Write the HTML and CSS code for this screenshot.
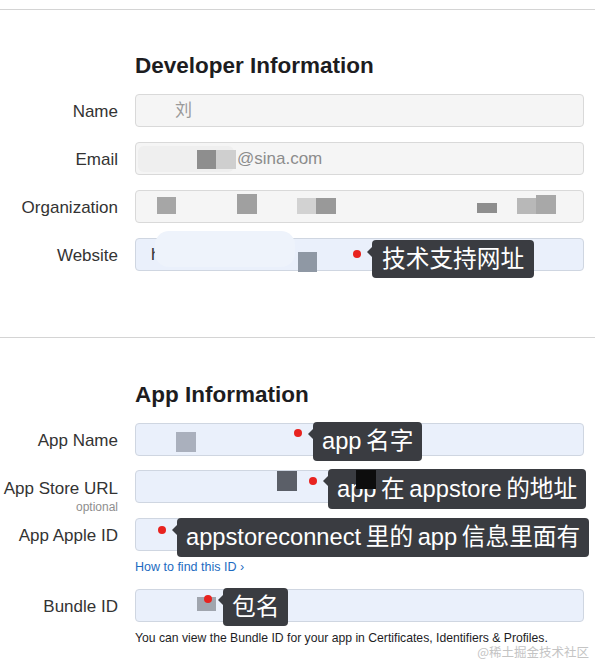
FILE: index.html
```html
<!DOCTYPE html>
<html lang="zh-CN">
<head>
    <meta charset="UTF-8">
    <meta name="viewport" content="width=device-width, initial-scale=1.0">
    <title>Developer and App Information</title>
    <link rel="stylesheet" href="styles.css">
</head>
<body>

    <div class="divider"></div>

    <section class="form-section dev-section">
        <h2>Developer Information</h2>

        <div class="row">
            <label>Name</label>
            <div class="field">
                <span class="value value-name">刘</span>
            </div>
        </div>

        <div class="row">
            <label>Email</label>
            <div class="field">
                <span class="blot blot-haze email-haze"></span>
                <span class="blot email-a"></span>
                <span class="blot email-b"></span>
                <span class="value value-email">@sina.com</span>
            </div>
        </div>

        <div class="row">
            <label>Organization</label>
            <div class="field">
                <span class="blot org-a"></span>
                <span class="blot org-b"></span>
                <span class="blot org-c"></span>
                <span class="blot org-d"></span>
                <span class="blot org-e"></span>
                <span class="blot org-f"></span>
                <span class="blot org-g"></span>
            </div>
        </div>

        <div class="row row-tight">
            <label>Website</label>
            <div class="field field-blue">
                <span class="value value-site">h</span>
                <span class="blot site-haze"></span>
                <span class="blot site-a"></span>
                <div class="note note-website">
                    <span class="dot"></span>
                    <span class="bubble">技术支持网址</span>
                </div>
            </div>
        </div>
    </section>

    <div class="divider"></div>

    <section class="form-section app-section">
        <h2>App Information</h2>

        <div class="row row-short">
            <label>App Name</label>
            <div class="field field-blue">
                <span class="blot appname-a"></span>
                <div class="note note-appname">
                    <span class="dot"></span>
                    <span class="bubble">app 名字</span>
                </div>
            </div>
        </div>

        <div class="row">
            <label class="label-stack">
                <span>App Store URL</span>
                <small>optional</small>
            </label>
            <div class="field field-blue">
                <span class="blot url-a"></span>
                <div class="note note-url">
                    <span class="dot"></span>
                    <span class="bubble">app 在 appstore 的地址</span>
                </div>
                <span class="blot url-b"></span>
            </div>
        </div>

        <div class="row row-tight">
            <label>App Apple ID</label>
            <div class="field field-blue">
                <div class="note note-appleid">
                    <span class="dot"></span>
                    <span class="bubble">appstoreconnect 里的 app 信息里面有</span>
                </div>
            </div>
        </div>
        <a href="#" class="help-link">How to find this ID ›</a>

        <div class="row row-tight">
            <label>Bundle ID</label>
            <div class="field field-blue">
                <span class="blot bundle-a"></span>
                <div class="note note-bundle">
                    <span class="dot"></span>
                    <span class="bubble">包名</span>
                </div>
            </div>
        </div>
        <p class="hint">You can view the Bundle ID for your app in Certificates, Identifiers &amp; Profiles.</p>
    </section>

    <div class="watermark">@稀土掘金技术社区</div>

</body>
</html>
```

FILE: styles.css
```css
body {
    margin: 0;
    padding-top: 9px;
    background-color: #ffffff;
    font-family: 'Liberation Sans', 'Noto Sans CJK SC', sans-serif;
    color: #222;
    position: relative;
    width: 595px;
    height: 664px;
    overflow: hidden;
}

.divider {
    border-top: 1px solid #d4d4d4;
}

.form-section {
    padding-right: 11px;
}

.dev-section {
    padding-top: 43px;
    padding-bottom: 66px;
}

.app-section {
    padding-top: 44px;
}

h2 {
    margin: 0 0 15px 135px;
    font-size: 22.5px;
    line-height: 26px;
    font-weight: bold;
    color: #1d1d1f;
}

.row {
    display: flex;
    align-items: center;
    margin-bottom: 15px;
}

.row-short {
    margin-bottom: 14px;
}

.row-tight {
    margin-bottom: 0;
}

.row label {
    width: 135px;
    box-sizing: border-box;
    padding-top: 3px;
    padding-right: 17px;
    text-align: right;
    font-size: 17px;
    color: #333;
    flex-shrink: 0;
}

.row .label-stack {
    height: 33px;
    padding-top: 2px;
    line-height: 33px;
}

.label-stack span {
    display: block;
}

.label-stack small {
    display: block;
    margin-top: -4px;
    font-size: 12px;
    line-height: 12px;
    color: #8e8e8e;
}

.field {
    position: relative;
    flex: 1;
    height: 33px;
    box-sizing: border-box;
    background-color: #f5f5f5;
    border: 1px solid #d9d9d9;
    border-radius: 4px;
    font-size: 17px;
    line-height: 31px;
    color: #8c8c8c;
}

.field-blue {
    background-color: #eaf0fb;
    border-color: #cfd6e1;
}

.value {
    position: relative;
    display: inline-block;
}

.value-name {
    margin-left: 39px;
    color: #9a9a9a;
}

.value-email {
    margin-left: 101px;
}

.value-site {
    margin-left: 15px;
    color: #333;
}

/* redaction patches */
.blot {
    position: absolute;
    display: block;
}

.email-haze {
    left: 2px;
    top: 3px;
    width: 96px;
    height: 26px;
    background-color: #efefef;
    border-radius: 6px;
}

.email-a { left: 61px; top: 7px; width: 19px; height: 19px; background-color: #8e8e8e; }
.email-b { left: 80px; top: 7px; width: 20px; height: 19px; background-color: #cfcfcf; }

.org-a { left: 21px; top: 6px; width: 19px; height: 17px; background-color: #a6a6a6; }
.org-b { left: 101px; top: 3px; width: 20px; height: 20px; background-color: #a0a0a0; }
.org-c { left: 161px; top: 7px; width: 19px; height: 16px; background-color: #d2d2d2; }
.org-d { left: 180px; top: 7px; width: 20px; height: 16px; background-color: #999999; }
.org-e { left: 341px; top: 12px; width: 20px; height: 10px; background-color: #8e8e8e; }
.org-f { left: 381px; top: 7px; width: 19px; height: 16px; background-color: #b8b8b8; }
.org-g { left: 400px; top: 4px; width: 20px; height: 19px; background-color: #a8a8a8; }

.site-haze {
    left: 19px;
    top: -8px;
    width: 140px;
    height: 36px;
    background-color: #eef3fb;
    border-radius: 14px;
}

.site-a { left: 162px; top: 13px; width: 19px; height: 20px; background-color: #8f98a4; }
.appname-a { left: 40px; top: 8px; width: 20px; height: 20px; background-color: #aab0bd; }
.url-a { left: 141px; top: 0; width: 20px; height: 20px; background-color: #5b5f68; }
.url-b { left: 220px; top: -1px; width: 20px; height: 19px; background-color: #0d0d0d; z-index: 3; }
.bundle-a { left: 61px; top: 7px; width: 19px; height: 14px; background-color: #a0a5ae; }

/* annotations */
.note {
    position: absolute;
    display: flex;
    align-items: flex-start;
    z-index: 2;
}

.dot {
    width: 8px;
    height: 8px;
    border-radius: 50%;
    background-color: #e8231f;
    margin-right: 11px;
    flex-shrink: 0;
}

.bubble {
    position: relative;
    display: block;
    height: 39px;
    padding: 0 9px;
    background-color: #3a3c41;
    border-radius: 4px;
    color: #ffffff;
    font-size: 23.7px;
    line-height: 39px;
    word-spacing: -2px;
    white-space: nowrap;
}

.bubble::before {
    content: '';
    position: absolute;
    left: -5px;
    top: 7px;
    border-top: 5px solid transparent;
    border-bottom: 5px solid transparent;
    border-right: 5px solid #3a3c41;
}

.note-website { left: 217px; top: 1px; }
.note-website .dot { margin-top: 10px; }
.note-website .bubble { height: 38px; padding: 0 10px; line-height: 38px; }

.note-appname { left: 158px; top: -2px; }
.note-appname .dot { margin-top: 7px; }

.note-url { left: 173px; top: -2px; }
.note-url .dot { margin-top: 8px; }
.note-url .bubble { height: 40px; line-height: 40px; }

.note-appleid { left: 22px; top: -1px; }
.note-appleid .dot { margin-top: 8px; }

.note-bundle { left: 68px; top: -2px; }
.note-bundle .dot { margin-top: 7px; }
.note-bundle .bubble { height: 38px; line-height: 38px; }

.help-link {
    display: block;
    margin: 9px 0 15px 135px;
    font-size: 12.5px;
    line-height: 14px;
    color: #1d6bc1;
    text-decoration: none;
}

.hint {
    margin: 9px 0 0 135px;
    font-size: 12.2px;
    line-height: 14px;
    color: #1d1d1f;
}

.watermark {
    position: absolute;
    top: 644px;
    right: 6px;
    font-size: 12.5px;
    line-height: 15px;
    color: #c4c4c4;
    font-family: 'Noto Sans CJK SC', sans-serif;
}
```
